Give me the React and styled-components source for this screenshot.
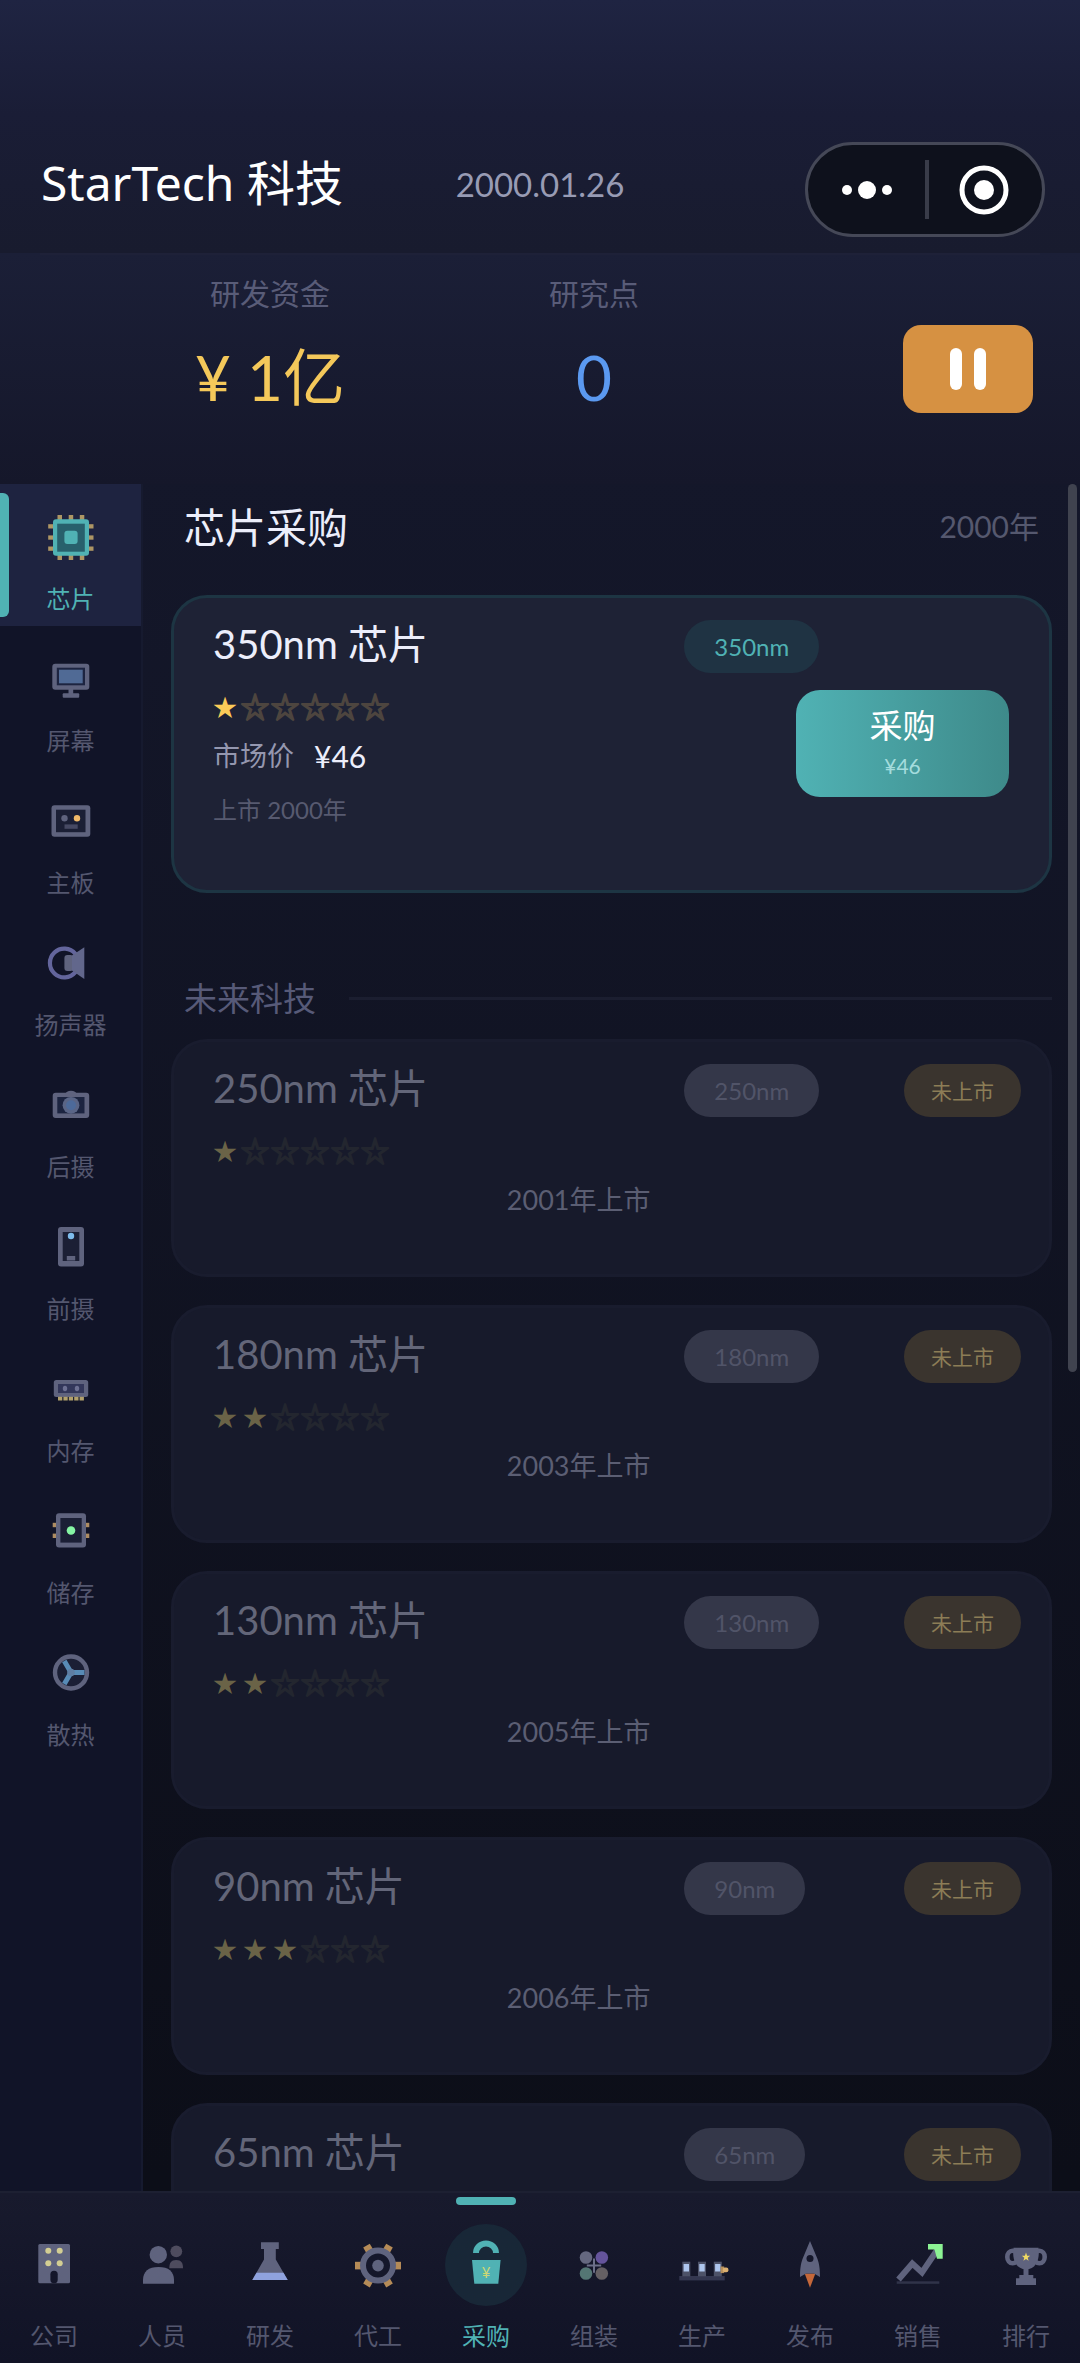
import React from "react";
import styled, { createGlobalStyle, css } from "styled-components";

const GlobalStyles = createGlobalStyle`
  * {
    box-sizing: border-box;
  }
  html, body {
    margin: 0;
    background-color: #0c0e18;
  }
  body, button {
    font-family: Lato, "Noto Sans CJK SC", sans-serif;
    font-weight: 400;
  }
  h1, h2, h3, p {
    margin: 0;
    font-weight: 400;
  }
  button {
    border: 0;
    padding: 0;
    background: none;
    color: inherit;
    cursor: pointer;
  }
`;

const GREY = "#5f637e";
const DARK = "#1b1f35";
const TEAL = "#50b2b4";

const AppStyles = styled.div`
  display: flex;
  flex-direction: column;
  height: 100vh;
  overflow: hidden;
  color: #eceefb;
  background: linear-gradient(180deg, #14172a 20%, #0c0e18 92%);
`;

const TopBar = styled.header`
  display: grid;
  grid-template-columns: 1fr auto 1fr;
  align-items: start;
  padding: 142px 35px 16px;
  background: linear-gradient(180deg, #1f2442, #1a1d36 45%, #181b2e);
`;

const Brand = styled.h1`
  padding-left: 6px;
  font-family: "Noto Sans", "Noto Sans CJK SC", sans-serif;
  font-size: 48px;
  line-height: 82px;
  color: #fff;
`;

const GameDate = styled.time`
  font-size: 33px;
  line-height: 84px;
  color: #989bb4;
`;

const Capsule = styled.div`
  justify-self: end;
  display: flex;
  align-items: center;
  width: 240px;
  height: 95px;
  border: 3px solid #454857;
  border-radius: 48px;
  background-color: #0e111c;
`;

const CapsuleButton = styled.button`
  flex: 1;
  display: flex;
  align-items: center;
  justify-content: center;
  height: 100%;
  & + & {
    position: relative;
  }
  & + &::before {
    content: "";
    position: absolute;
    left: 0;
    top: 15px;
    bottom: 15px;
    width: 4px;
    background-color: #393c49;
  }
`;

const StatsBar = styled.section`
  display: grid;
  grid-template-columns: repeat(3, 1fr);
  align-items: start;
  padding: 0 0 67px 108px;
  position: relative;
  background: linear-gradient(180deg, #1b1f37, #15172a);
  &::before {
    content: "";
    position: absolute;
    top: 0;
    left: 40px;
    right: 40px;
    height: 2px;
    background-color: #1e2138;
  }
`;

const Stat = styled.div`
  padding-top: 20px;
  text-align: center;
`;

const StatLabel = styled.p`
  font-size: 30px;
  line-height: 40px;
  color: #595c78;
`;

const StatValue = styled.p`
  margin-top: 24px;
  font-size: 62px;
  line-height: 80px;
  color: ${(props) => props.$color};
`;

const PauseButton = styled.button`
  justify-self: end;
  display: flex;
  align-items: center;
  justify-content: center;
  gap: 12px;
  width: 130px;
  height: 88px;
  margin: 72px 47px 0 0;
  border-radius: 18px;
  background-color: #d69142;
  span {
    width: 12px;
    height: 42px;
    border-radius: 6px;
    background-color: #fff;
  }
`;

const Body = styled.div`
  flex: 1;
  display: flex;
  min-height: 0;
`;

const Sidebar = styled.aside`
  flex: none;
  width: 143px;
  border-right: 2px solid #161a2f;
  background-color: #111428;
`;

const SideItem = styled.button`
  display: flex;
  flex-direction: column;
  align-items: center;
  position: relative;
  width: 100%;
  height: 142px;
  padding-top: 29px;
  font-size: 24px;
  line-height: 28px;
  color: #54576f;
  svg {
    margin-bottom: 24px;
  }
  ${(props) =>
    props.$active &&
    css`
      color: ${TEAL};
      background-color: #1e2340;
      &::before {
        content: "";
        position: absolute;
        left: 0;
        top: 9px;
        bottom: 9px;
        width: 9px;
        border-radius: 0 6px 6px 0;
        background-color: ${TEAL};
      }
    `}
`;

const Main = styled.main`
  flex: 1;
  min-width: 0;
  position: relative;
  overflow-y: auto;
  scrollbar-width: none;
  padding: 0 28px;
`;

const ScrollThumb = styled.div`
  position: absolute;
  top: 0;
  right: 3px;
  width: 9px;
  height: 52%;
  border-radius: 5px;
  background-color: #40434f;
`;

const PageHead = styled.div`
  display: flex;
  align-items: center;
  justify-content: space-between;
  height: 81px;
  margin-bottom: 30px;
  padding: 0 13px;
  h2 {
    font-size: 41px;
  }
  span {
    font-size: 30px;
    color: #55586e;
  }
`;

const Divider = styled.h2`
  display: flex;
  align-items: center;
  gap: 33px;
  margin: 85px 0 21px;
  padding-left: 13px;
  font-size: 33px;
  line-height: 40px;
  color: #575a78;
  &::after {
    content: "";
    flex: 1;
    height: 3px;
    background-color: #1b1e30;
  }
`;

const CardStyles = styled.article`
  margin-bottom: 28px;
  padding: 22px 28px ${(props) => (props.$locked ? 56 : 60)}px 39px;
  border: 3px solid ${(props) => (props.$locked ? "#191c2e" : "#1d3543")};
  border-radius: 36px;
  background-color: ${(props) => (props.$locked ? "#171a2b" : "#1e2235")};
`;

const CardHead = styled.div`
  display: grid;
  grid-template-columns: 7fr 5fr;
  align-items: start;
  height: 53px;
  margin-bottom: 15px;
  h3 {
    font-size: 40px;
    line-height: 48px;
    color: ${(props) => (props.$locked ? "#636679" : "#eceefb")};
  }
`;

const Tags = styled.div`
  display: flex;
  justify-content: space-between;
`;

const tagTones = {
  teal: ["#1f3343", TEAL],
  grey: ["#343749", "#515468"],
  gold: ["#3a342e", "#8c7d56"],
};

const Tag = styled.span`
  padding: 0 ${(props) => (props.$tone === "gold" ? 27 : 30)}px;
  border-radius: 27px;
  font-size: ${(props) => (props.$tone === "gold" ? 21 : 24)}px;
  line-height: 53px;
  color: ${(props) => tagTones[props.$tone][1]};
  background-color: ${(props) => tagTones[props.$tone][0]};
`;

const CardBody = styled.div`
  display: flex;
  align-items: flex-start;
  justify-content: space-between;
  padding-right: 12px;
`;

const StarsStyles = styled.div`
  display: flex;
  gap: 6px;
  height: 38px;
  --star-on: ${(props) => (props.$locked ? "#6a6347" : "#fbcb58")};
  --star-off: ${(props) => (props.$locked ? "#23262f" : "#4d453f")};
`;

const Star = styled.span`
  display: flex;
  justify-content: center;
  width: 24px;
  line-height: 36px;
  font-family: "Noto Sans CJK SC", sans-serif;
  font-size: ${(props) => (props.$on ? 24 : 28)}px;
  color: ${(props) => (props.$on ? "var(--star-on)" : "var(--star-off)")};
  -webkit-text-stroke: ${(props) => (props.$on ? 0 : 2)}px var(--star-off);
`;

const Price = styled.p`
  display: flex;
  align-items: center;
  gap: 20px;
  margin-top: 12px;
  font-size: 27px;
  line-height: 36px;
  color: #9497af;
  strong {
    font-size: 30px;
    font-weight: 400;
    color: #eceefb;
  }
`;

const Launch = styled.p`
  margin-top: 16px;
  font-size: 24px;
  line-height: 40px;
  color: #575a70;
`;

const FutureDate = styled.div`
  display: grid;
  grid-template-columns: 4fr 7fr;
  margin-top: 12px;
  font-size: 27px;
  line-height: 36px;
  color: #5b5e73;
  p {
    grid-column: 2;
  }
`;

const BuyButton = styled.button`
  display: flex;
  flex-direction: column;
  align-items: center;
  width: 213px;
  height: 107px;
  margin-top: 2px;
  padding-top: 14px;
  border-radius: 24px;
  font-size: 33px;
  line-height: 42px;
  color: #fff;
  background: linear-gradient(90deg, #50b2b4, #3e8a8a);
  small {
    font-size: 21px;
    line-height: 40px;
    color: #a4dcdd;
  }
`;

const BottomNav = styled.nav`
  display: grid;
  grid-template-columns: repeat(10, 1fr);
  border-top: 2px solid #1d2032;
  background: linear-gradient(180deg, #181a2d, #111326);
`;

const NavItem = styled.a`
  display: flex;
  flex-direction: column;
  align-items: center;
  gap: 16px;
  position: relative;
  padding: 31px 0 13px;
  font-size: 24px;
  line-height: 28px;
  text-decoration: none;
  color: #54576f;
  ${(props) =>
    props.$active &&
    css`
      color: ${TEAL};
      &::before {
        content: "";
        position: absolute;
        top: 4px;
        width: 60px;
        height: 8px;
        border-radius: 4px;
        background-color: ${TEAL};
      }
    `}
`;

const NavIcon = styled.span`
  display: flex;
  align-items: center;
  justify-content: center;
  width: 82px;
  height: 82px;
  border-radius: 50%;
  background-color: ${(props) => (props.$active ? "#182737" : "transparent")};
  svg {
    overflow: visible;
  }
`;

const Icon = ({ children }) => (
  <svg width="48" height="48" viewBox="0 0 48 48" fill={GREY} aria-hidden="true">
    {children}
  </svg>
);

const ChipIcon = () => (
  <Icon>
    <g fill="#ad9664">
      {[10.5, 21.7, 32.8].map((n) => (
        <g key={n}>
          <rect x={n} y="2" width="4.5" height="5" />
          <rect x={n} y="42" width="4.5" height="5" />
          <rect x="1.2" y={n + 0.7} width="5" height="4.3" />
          <rect x="41.5" y={n + 0.7} width="5" height="4.3" />
        </g>
      ))}
    </g>
    <rect x="6" y="6.3" width="36" height="36.5" rx="3" fill={TEAL} />
    <rect x="10.2" y="10.7" width="27.6" height="28" fill="#28606c" />
    <rect x="17.4" y="17.8" width="13.2" height="13.2" rx="3" fill={TEAL} />
  </Icon>
);

const ScreenIcon = () => (
  <Icon>
    <rect x="5.3" y="8.7" width="37" height="26" rx="3" />
    <rect x="9.8" y="12.7" width="28.2" height="17.6" fill="#1d2440" />
    <rect x="12" y="14.7" width="23.7" height="13.6" fill="#506a95" />
    <rect x="21.5" y="34" width="4.7" height="5" />
    <rect x="15.7" y="38.3" width="16.5" height="4.4" rx="1" />
  </Icon>
);

const BoardIcon = () => (
  <Icon>
    <rect x="4.5" y="8.3" width="38.8" height="31.4" rx="3" />
    <rect x="9" y="12.7" width="29.5" height="22.5" fill={DARK} />
    <circle cx="17.5" cy="21.3" r="3.2" />
    <circle cx="30" cy="21.3" r="3.2" fill="#f0b969" />
    <rect x="17.5" y="27.4" width="13.2" height="4.4" fill="#464963" />
  </Icon>
);

const SpeakerIcon = () => (
  <Icon>
    <path
      d="M28.4 14.8A14.4 14.4 0 1 0 28.4 33.2"
      fill="none"
      stroke="#63659c"
      strokeWidth="4.2"
      strokeLinecap="round"
    />
    <rect x="17.4" y="16" width="9" height="16" rx="3" />
    <path d="M25 16.5L37.3 8.3V40L25 31.5Z" fill="#62678c" />
  </Icon>
);

const RearCameraIcon = () => (
  <Icon>
    <rect x="5.7" y="11.7" width="36.5" height="25.4" rx="3" />
    <ellipse cx="24" cy="13" rx="5.5" ry="3.3" />
    <rect x="10.3" y="16" width="27.2" height="16.4" fill="#1c2440" />
    <circle cx="24" cy="24.3" r="8.4" fill="#5a6586" />
    <circle cx="24" cy="24.3" r="5" fill="#4d6a9a" />
  </Icon>
);

const FrontCameraIcon = () => (
  <Icon>
    <rect x="11" y="4" width="26" height="39.4" rx="3" />
    <rect x="15.7" y="9" width="16.6" height="29" fill={DARK} />
    <circle cx="24" cy="13" r="3.2" fill="#7ebcec" />
    <rect x="19.8" y="33" width="8.4" height="4.5" />
  </Icon>
);

const MemoryIcon = () => (
  <Icon>
    <rect x="6.8" y="15" width="34.4" height="17" rx="2.5" />
    <rect x="11" y="19" width="26" height="9" fill="#33375a" />
    <ellipse cx="18" cy="23.5" rx="2.2" ry="2.8" fill="#6d7092" />
    <ellipse cx="30" cy="23.5" rx="2.2" ry="2.8" fill="#6d7092" />
    {[11, 16.4, 21.8, 27.2, 32.6].map((x) => (
      <rect key={x} x={x} y="31.8" width="4.3" height="3.7" fill="#b2a16c" />
    ))}
  </Icon>
);

const StorageIcon = () => (
  <Icon>
    {[15.8, 26.6].map((y) => (
      <g key={y} fill="#ad8c62">
        <rect x="5.7" y={y} width="6" height="4.4" />
        <rect x="36.3" y={y} width="6" height="4.4" />
      </g>
    ))}
    <rect x="9" y="6.3" width="30" height="34.2" rx="3" />
    <rect x="13.4" y="11" width="21.3" height="24.6" fill={DARK} />
    <circle cx="24" cy="23.5" r="4.3" fill="#86f5a4" />
  </Icon>
);

const FanIcon = () => (
  <Icon>
    <circle cx="24" cy="23.5" r="16" fill={DARK} stroke={GREY} strokeWidth="4.4" />
    <path
      d="M24 23.5H37.5M24 23.5L17.3 12M24 23.5L17.3 35"
      stroke="#588bb6"
      strokeWidth="5"
    />
    <circle cx="24" cy="23.5" r="3.8" fill="#5f7ea3" />
  </Icon>
);

const CompanyIcon = () => (
  <Icon>
    <rect x="8.3" y="3" width="31.7" height="39.3" rx="1.5" />
    {[9.7, 22.3].map((y) => (
      <g key={y} fill="#d3ce93">
        <circle cx="18.3" cy={y} r="3" />
        <circle cx="29.7" cy={y} r="3" />
      </g>
    ))}
    <rect x="20.4" y="29.7" width="7.3" height="12.6" rx="3.6" fill="#14162a" />
  </Icon>
);

const PeopleIcon = () => (
  <Icon>
    <g fill="#4e4c5e">
      <circle cx="38.3" cy="10.3" r="5.9" />
      <path d="M31.3 27.3C31.3 22 33 19 38.2 19S45 22 45 27.3Z" />
    </g>
    <circle cx="20.3" cy="13.7" r="8.7" />
    <path d="M5 42.7V39C5 30.5 10.5 26 20.5 26S36 30.5 36 39V42.7Z" />
  </Icon>
);

const FlaskIcon = () => (
  <Icon>
    <path d="M15 1.3H32.8V8H29.8V18.5L41.7 39H6.3L18 18.5V8H15Z" />
    <path d="M10.5 31.7H37.5L41.7 39H6.3Z" fill="#8fa2de" />
  </Icon>
);

const GearIcon = () => (
  <Icon>
    {[0, 60, 120, 180, 240, 300].map((a) => (
      <rect
        key={a}
        x="40"
        y="20.8"
        width="7"
        height="7.6"
        fill="#b58b57"
        transform={`rotate(${a} 24 24.6)`}
      />
    ))}
    <circle cx="24" cy="24.6" r="15" fill="#15172b" stroke={GREY} strokeWidth="6" />
    <circle cx="24" cy="24.6" r="5.8" />
  </Icon>
);

const ShopIcon = () => (
  <Icon>
    <path d="M14 12A10 9.5 0 0 1 34 12" fill="none" stroke={TEAL} strokeWidth="6" />
    <path d="M10 19H38.6L36.3 42.8H12.3Z" fill={TEAL} />
    <text x="24" y="36.5" fontSize="15" textAnchor="middle" fill="#cbd774">
      ¥
    </text>
  </Icon>
);

const AssembleIcon = () => (
  <Icon>
    <circle cx="16" cy="16.5" r="6.3" fill="#656880" />
    <circle cx="31.8" cy="16.5" r="6.3" fill="#65549b" />
    <circle cx="16" cy="32.5" r="6.3" fill="#547674" />
    <circle cx="31.8" cy="32.5" r="6.3" fill="#656064" />
    <path d="M24 17.5V31.7M16.8 24.6H31.2" stroke="#6c6f88" strokeWidth="2" />
  </Icon>
);

const ProduceIcon = () => (
  <Icon>
    <rect x="1.3" y="35" width="45.4" height="4.4" fill="#343750" />
    {[4.3, 20, 35.8].map((x) => (
      <g key={x}>
        <rect x={x} y="20.7" width="8" height="14.6" fill="#4d5268" />
        <rect x={x + 1.3} y="23" width="5.4" height="7.5" fill="#aec6ee" />
      </g>
    ))}
    <rect x="42.6" y="25.5" width="3.6" height="6.6" fill="#b58f5c" />
    <rect x="44.8" y="26.4" width="5.6" height="4.8" rx="2" fill="#dcb070" />
  </Icon>
);

const RocketIcon = () => (
  <Icon>
    <path d="M18.7 32.5H29.4L24 46.8Z" fill="#c4673a" />
    <path d="M24 0L31.5 18C33.3 23 34 28 34 36L28 32.4H20L14 36C14 28 14.7 23 16.5 18Z" />
    <circle cx="24" cy="17.4" r="3.5" fill="#15172b" />
  </Icon>
);

const SalesIcon = () => (
  <Icon>
    <rect x="2.7" y="40.3" width="42.6" height="2.5" fill="#303349" />
    <path
      d="M4.5 38.5L18.3 22.5L28 31.5L43.5 8.5"
      fill="none"
      stroke={GREY}
      strokeWidth="6"
    />
    <path d="M34 3H48.7V17.7H43L40.5 8.6H34Z" fill="#8cf394" />
  </Icon>
);

const TrophyIcon = () => (
  <Icon>
    <g fill="none" stroke={GREY} strokeWidth="4.6">
      <ellipse cx="10.6" cy="16" rx="5.3" ry="6.3" />
      <ellipse cx="37.4" cy="16" rx="5.3" ry="6.3" />
    </g>
    <path d="M11.5 6.7H36.5C38 18 34.5 28.3 24 28.3S10 18 11.5 6.7Z" />
    <path d="M21.5 28H26.5V34H31.3V37.3H34V44H14V37.3H17.3V34H21.5Z" />
    <path
      d="M24 11.6L25.1 14.7H28.2L25.7 16.7L26.6 19.8L24 17.9L21.4 19.8L22.3 16.7L19.8 14.7H22.9Z"
      fill="#f0da62"
    />
  </Icon>
);

const categories = [
  { name: "芯片", icon: ChipIcon },
  { name: "屏幕", icon: ScreenIcon },
  { name: "主板", icon: BoardIcon },
  { name: "扬声器", icon: SpeakerIcon },
  { name: "后摄", icon: RearCameraIcon },
  { name: "前摄", icon: FrontCameraIcon },
  { name: "内存", icon: MemoryIcon },
  { name: "储存", icon: StorageIcon },
  { name: "散热", icon: FanIcon },
];

const pages = [
  { name: "公司", to: "company", icon: CompanyIcon },
  { name: "人员", to: "staff", icon: PeopleIcon },
  { name: "研发", to: "research", icon: FlaskIcon },
  { name: "代工", to: "foundry", icon: GearIcon },
  { name: "采购", to: "purchase", icon: ShopIcon },
  { name: "组装", to: "assembly", icon: AssembleIcon },
  { name: "生产", to: "production", icon: ProduceIcon },
  { name: "发布", to: "release", icon: RocketIcon },
  { name: "销售", to: "sales", icon: SalesIcon },
  { name: "排行", to: "ranking", icon: TrophyIcon },
];

const futureChips = [
  { node: "250nm", stars: 1, year: 2001 },
  { node: "180nm", stars: 2, year: 2003 },
  { node: "130nm", stars: 2, year: 2005 },
  { node: "90nm", stars: 3, year: 2006 },
  { node: "65nm" },
];

const Stars = ({ count, locked }) => (
  <StarsStyles $locked={locked}>
    {[0, 1, 2, 3, 4, 5].map((i) => (
      <Star key={i} $on={i < count}>
        {i < count ? "★" : "☆"}
      </Star>
    ))}
  </StarsStyles>
);

const OwnedChip = ({ node, stars, price, year }) => (
  <CardStyles>
    <CardHead>
      <h3>{node} 芯片</h3>
      <Tags>
        <Tag $tone="teal">{node}</Tag>
      </Tags>
    </CardHead>
    <CardBody>
      <div>
        <Stars count={stars} />
        <Price>
          市场价 <strong>¥{price}</strong>
        </Price>
        <Launch>上市 {year}年</Launch>
      </div>
      <BuyButton type="button">
        采购
        <small>¥{price}</small>
      </BuyButton>
    </CardBody>
  </CardStyles>
);

const FutureChip = ({ node, stars, year }) => (
  <CardStyles $locked>
    <CardHead $locked>
      <h3>{node} 芯片</h3>
      <Tags>
        <Tag $tone="grey">{node}</Tag>
        <Tag $tone="gold">未上市</Tag>
      </Tags>
    </CardHead>
    {stars && <Stars count={stars} locked />}
    {year && (
      <FutureDate>
        <p>{year}年上市</p>
      </FutureDate>
    )}
  </CardStyles>
);

const App = () => {
  return (
    <AppStyles>
      <GlobalStyles />
      <TopBar>
        <Brand>StarTech 科技</Brand>
        <GameDate>2000.01.26</GameDate>
        <Capsule>
          <CapsuleButton type="button" aria-label="更多">
            <svg width="50" height="20" viewBox="0 0 50 20" fill="#fff">
              <circle cx="5" cy="10" r="5" />
              <circle cx="25" cy="10" r="9" />
              <circle cx="45" cy="10" r="5" />
            </svg>
          </CapsuleButton>
          <CapsuleButton type="button" aria-label="关闭">
            <svg width="50" height="50" viewBox="0 0 50 50" fill="#fff">
              <circle cx="25" cy="25" r="22" fill="none" stroke="#fff" strokeWidth="5" />
              <circle cx="25" cy="25" r="10" />
            </svg>
          </CapsuleButton>
        </Capsule>
      </TopBar>
      <StatsBar>
        <Stat>
          <StatLabel>研发资金</StatLabel>
          <StatValue $color="#f4c85a">¥ 1亿</StatValue>
        </Stat>
        <Stat>
          <StatLabel>研究点</StatLabel>
          <StatValue $color="#5b99f0">0</StatValue>
        </Stat>
        <PauseButton type="button" aria-label="暂停">
          <span />
          <span />
        </PauseButton>
      </StatsBar>
      <Body>
        <Sidebar>
          {categories.map(({ name, icon: CategoryIcon }, index) => (
            <SideItem key={name} type="button" $active={index === 0}>
              <CategoryIcon />
              {name}
            </SideItem>
          ))}
        </Sidebar>
        <Main>
          <PageHead>
            <h2>芯片采购</h2>
            <span>2000年</span>
          </PageHead>
          <OwnedChip node="350nm" stars={1} price={46} year={2000} />
          <Divider>未来科技</Divider>
          {futureChips.map((chip) => (
            <FutureChip key={chip.node} {...chip} />
          ))}
          <ScrollThumb />
        </Main>
      </Body>
      <BottomNav>
        {pages.map(({ name, to, icon: PageIcon }) => (
          <NavItem key={to} href={`#${to}`} $active={to === "purchase"}>
            <NavIcon $active={to === "purchase"}>
              <PageIcon />
            </NavIcon>
            {name}
          </NavItem>
        ))}
      </BottomNav>
    </AppStyles>
  );
};

export default App;
